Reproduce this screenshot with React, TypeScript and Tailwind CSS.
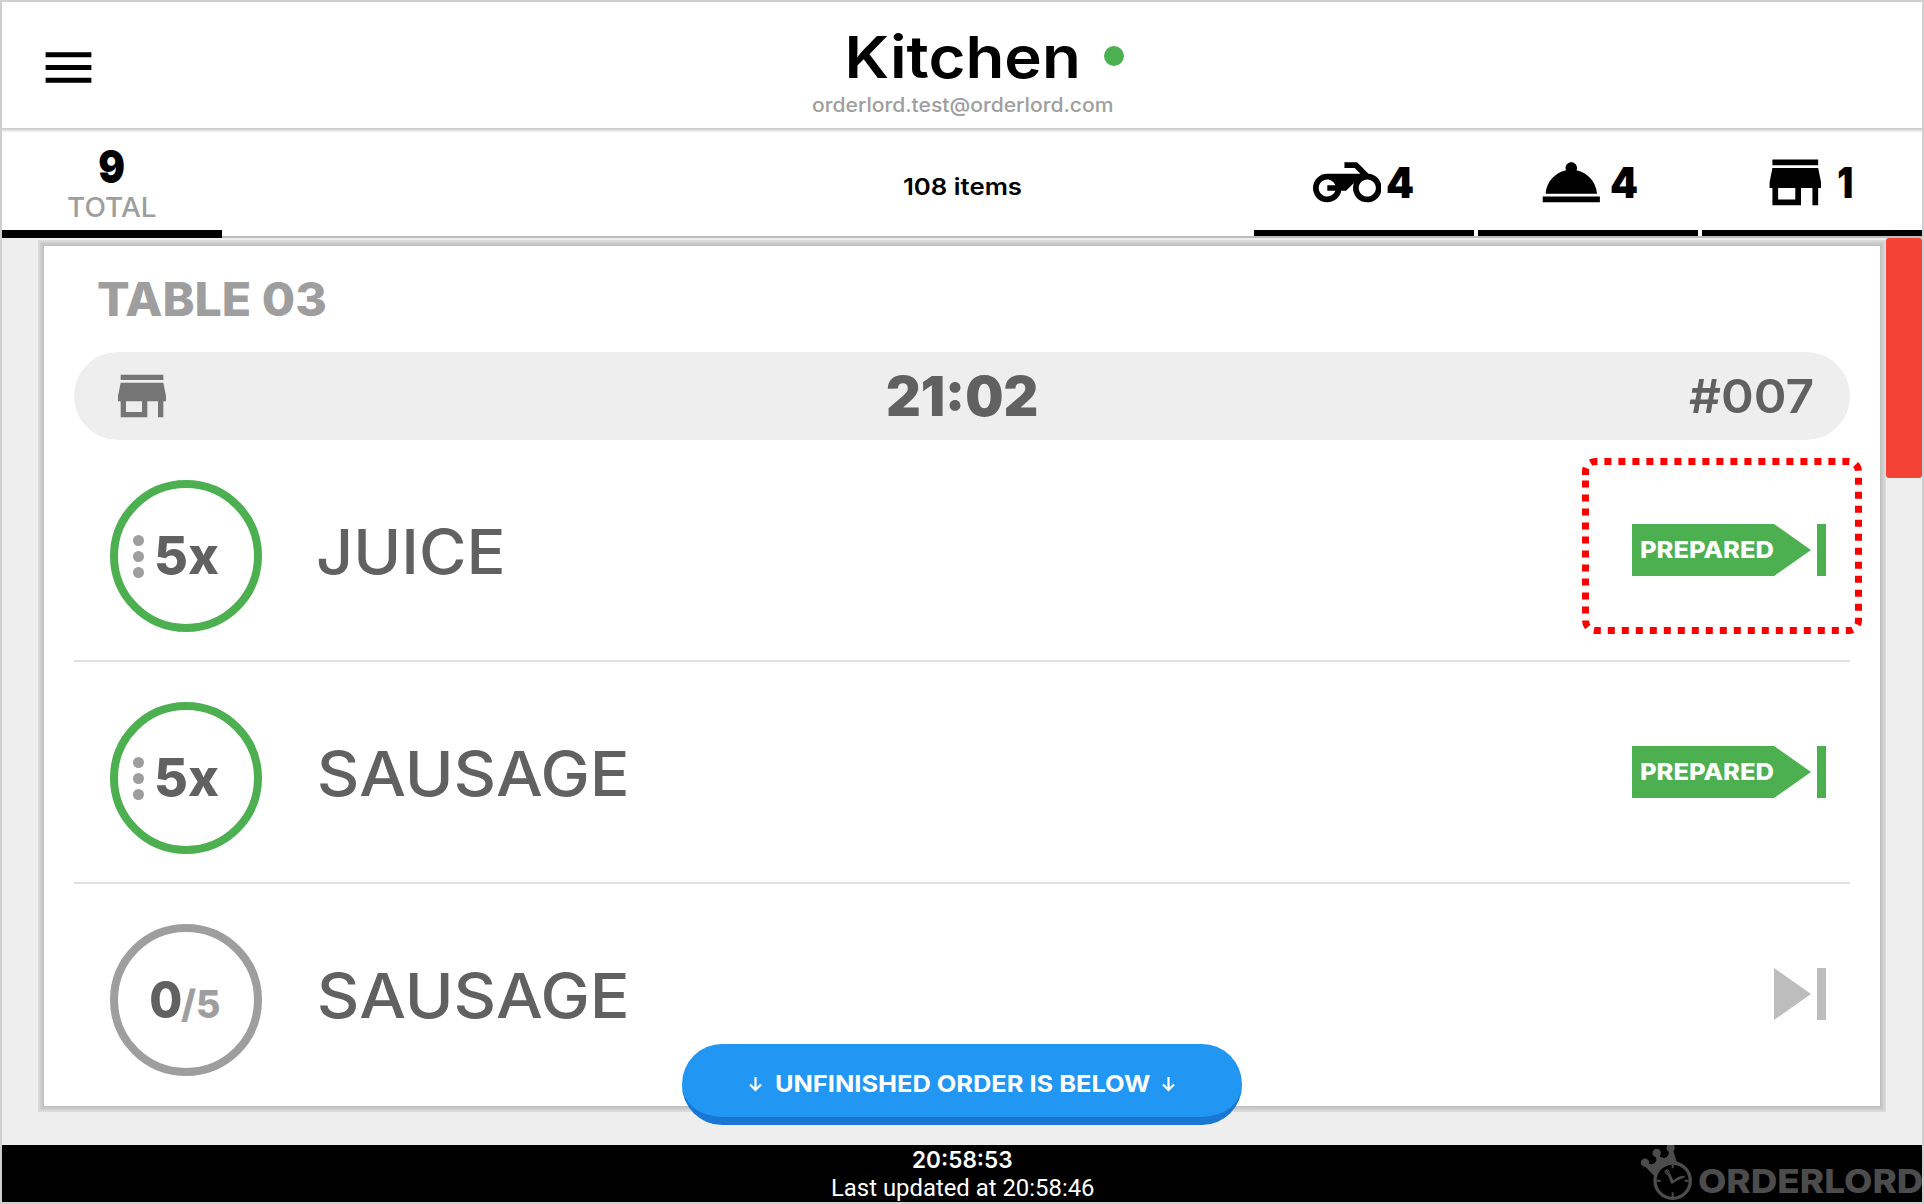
import { useLayoutEffect, useRef, useState } from "react";

type FitProps = { text: string; width: number; className: string };

/* Single line label whose visible glyphs span exactly `width` pixels. */
function Fit({ text, width, className }: FitProps) {
  const ref = useRef<HTMLSpanElement>(null);
  const [transform, setTransform] = useState("none");
  useLayoutEffect(() => {
    const el = ref.current;
    const ctx = document.createElement("canvas").getContext("2d");
    if (!el || !ctx) return;
    const cs = getComputedStyle(el);
    ctx.font = `${cs.fontWeight} ${cs.fontSize} ${cs.fontFamily}`;
    const m = ctx.measureText(text);
    const ink = m.actualBoundingBoxLeft + m.actualBoundingBoxRight;
    const k = width / ink;
    setTransform(`translateX(${m.actualBoundingBoxLeft * k}px) scaleX(${k})`);
  }, [text, width]);
  return (
    <span className={`block shrink-0 whitespace-nowrap text-left leading-none ${className}`} style={{ width }}>
      <span ref={ref} className="inline-block origin-left align-top" style={{ transform }}>
        {text}
      </span>
    </span>
  );
}

const STORE =
  "M20 4H4v2h16V4zm1 10v-2l-1-5H4l-1 5v2h1v6h10v-6h4v6h2v-6h1zm-9 4H6v-4h6v4z";
const MOTO =
  "M19.44 9.03L15.41 5H11v2h3.59l2 2H5c-2.8 0-5 2.2-5 5s2.2 5 5 5c2.46 0 4.45-1.69 4.9-4h1.65l2.77-2.77c-.21.54-.32 1.14-.32 1.77 0 2.8 2.2 5 5 5s5-2.2 5-5c0-2.65-1.97-4.77-4.56-4.97zM7.82 15C7.4 16.15 6.28 17 5 17c-1.63 0-3-1.37-3-3s1.37-3 3-3c1.28 0 2.4.85 2.82 2H5v2h2.82zM19 17c-1.66 0-3-1.34-3-3s1.34-3 3-3 3 1.34 3 3-1.34 3-3 3z";
const DISH =
  "M2 17h20v2H2zm11.84-9.21c.1-.24.16-.51.16-.79 0-1.1-.9-2-2-2s-2 .9-2 2c0 .28.06.55.16.79C6.25 8.6 3.27 11.93 3 16h18c-.27-4.07-3.25-7.4-7.16-8.21z";

function Icon({ d, className }: { d: string; className: string }) {
  return (
    <svg viewBox="0 0 24 24" fill="currentColor" className={`shrink-0 ${className}`}>
      <path d={d} />
    </svg>
  );
}

function Header() {
  return (
    <header className="relative z-10 grid h-[126px] grid-cols-[1fr_auto_1fr] items-start bg-white shadow-[0_1px_0_#cbcbcb,0_2px_0_#d6d6d6,0_3px_0_#e4e4e4,0_4px_0_#f0f0f0,0_5px_0_#fafafa]">
      <Icon d="M3 18h18v-2H3v2zm0-5h18v-2H3v2zm0-7v2h18V6H3z" className="ml-[35.6px] mt-[35px] size-[61px]" />
      <div className="flex flex-col items-center pt-[26px]">
        <div className="relative left-px">
          <Fit text="Kitchen" width={228} className="text-[58px] font-semibold" />
          <span className="absolute left-full top-[18px] ml-[27px] size-5 rounded-full bg-[#4caf50]" />
        </div>
        <Fit text="orderlord.test@orderlord.com" width={300} className="mt-[10px] text-[19.5px] font-medium text-[#9e9e9e]" />
      </div>
    </header>
  );
}

const tabs = [
  { icon: MOTO, n: "4", w: 26, gap: "gap-[6px]" },
  { icon: DISH, n: "4", w: 26, gap: "gap-[6px]" },
  { icon: STORE, n: "1", w: 14, gap: "gap-[9px]" },
];

function Tabs() {
  return (
    <nav className="flex h-[110px] items-start bg-white shadow-[inset_0_-2px_0_#bdbdbd]">
      <div className="flex h-[110px] w-[220px] flex-col items-center border-b-8 border-black pt-[15px]">
        <Fit text="9" width={25} className="mr-px text-[46px] font-black" />
        <Fit text="TOTAL" width={88} className="mt-[4.5px] text-[27.5px] font-medium text-[#9e9e9e]" />
      </div>
      <div className="flex-1 pl-[682px] pt-[47px]">
        <Fit text="108 items" width={117} className="text-[23.5px] font-semibold" />
      </div>
      <div className="flex gap-1">
        {tabs.map((t, i) => (
          <div key={i} className={`flex h-[108px] w-[220px] items-center border-b-6 border-black pl-[58.7px] pt-[6px] ${t.gap}`}>
            <Icon d={t.icon} className="size-[68.6px]" />
            <Fit text={t.n} width={t.w} className="text-[43px] font-black" />
          </div>
        ))}
      </div>
    </nav>
  );
}

function DoneCount() {
  return (
    <div className="ml-9 mt-10 flex size-[152px] items-center rounded-full border-8 border-[#4caf50] pl-[14.5px]">
      <div className="mr-[12px] flex flex-col gap-[5px]">
        <i className="size-[11px] rounded-full bg-[#9e9e9e]" />
        <i className="size-[11px] rounded-full bg-[#9e9e9e]" />
        <i className="size-[11px] rounded-full bg-[#9e9e9e]" />
      </div>
      <Fit text="5x" width={63} className="text-[52px] font-extrabold" />
    </div>
  );
}

function OpenCount() {
  return (
    <div className="ml-9 mt-10 flex size-[152px] items-center rounded-full border-8 border-[#9e9e9e] pb-[2px] pl-[33px]">
      <div className="flex items-baseline">
        <Fit text="0" width={30} className="text-[51px] font-extrabold" />
        <Fit text="/5" width={38.5} className="text-[38.5px] font-extrabold text-[#9e9e9e]" />
      </div>
    </div>
  );
}

function PreparedFlag() {
  return (
    <div className="mr-6 mt-[84px] flex h-[52px] gap-[6px]">
      <div className="flex w-[179px] items-center bg-[#4caf50] pl-[9px] text-white [clip-path:polygon(0_0,142px_0,100%_50%,142px_100%,0_100%)]">
        <Fit text="PREPARED" width={133} className="text-[23.5px] font-extrabold" />
      </div>
      <div className="w-[9px] bg-[#4caf50]" />
    </div>
  );
}

function SkipMark() {
  return (
    <div className="mr-6 mt-[84px] flex h-[52px] gap-[6px]">
      <div className="w-[37px] bg-[#bdbdbd] [clip-path:polygon(0_0,100%_50%,0_100%)]" />
      <div className="w-[9px] bg-[#bdbdbd]" />
    </div>
  );
}

const rows = [
  { name: "JUICE", w: 184, done: true, left: "ml-14" },
  { name: "SAUSAGE", w: 306, done: true, left: "ml-[58px]" },
  { name: "SAUSAGE", w: 306, done: false, left: "ml-[58px]" },
];

function OrderCard() {
  return (
    <article className="mx-[42px] h-[860px] bg-white px-[30px] text-[#616161] shadow-[0_0_0_1px_#bfbfbf,0_0_0_2px_#c5c5c5,0_0_0_3px_#cbcbcb,0_0_0_4px_#d0d0d0,0_0_0_5px_#d6d6d6,0_0_0_6px_#dbdbdb]">
      <div className="flex h-[106px] items-center pb-[2px] pl-6">
        <Fit text="TABLE 03" width={227} className="text-[47px] font-extrabold text-[#9e9e9e]" />
      </div>
      <div className="grid h-[88px] grid-cols-[1fr_auto_1fr] items-center rounded-full bg-[#eeeeee] pl-9 pr-[37px]">
        <Icon d={STORE} className="size-16 text-[#757575]" />
        <Fit text="21:02" width={150} className="text-[54.5px] font-black" />
        <div className="flex justify-end pb-[2px]">
          <Fit text="#007" width={124} className="text-[47px] font-semibold" />
        </div>
      </div>
      {rows.map((r, i) => (
        <div key={i} className="flex h-[222px] items-start border-b-2 border-[#e0e0e0] last:border-0">
          {r.done ? <DoneCount /> : <OpenCount />}
          <Fit text={r.name} width={r.w} className={`mt-[80.5px] text-[62px] font-medium ${r.left}`} />
          <div className="flex flex-1 justify-end">{r.done ? <PreparedFlag /> : <SkipMark />}</div>
        </div>
      ))}
    </article>
  );
}

function DownArrow() {
  return (
    <svg viewBox="0 0 13 15" className="h-[15px] w-[13px] shrink-0" fill="none" stroke="#fff" strokeWidth="2.2">
      <path d="M6.5 0v13M1 7.5l5.5 5.5L12 7.5" />
    </svg>
  );
}

function Logo() {
  return (
    <div className="flex h-[57px] items-start justify-end overflow-hidden text-[#4c4c4c]">
      <svg viewBox="60 15 160 168" className="h-[56px] w-[53.33px] shrink-0" fill="currentColor">
        <circle cx="75" cy="68" r="12.5" />
        <circle cx="110" cy="39" r="12.5" />
        <circle cx="152" cy="24" r="12.5" />
        <path d="M72 76L103 108Q130 72 171 68L159 30L147 30Q148 50 134 54Q122 54 117 46L106 48Q114 62 103 70Q92 76 82 68Z" />
        <circle cx="158" cy="122" r="53" fill="#000" stroke="currentColor" strokeWidth="10" />
        <path d="M155 74h6v11h-6zM155 157h6v14h-6zM110 119h12v6h-12zM194 119h12v6h-12z" />
        <path d="M154 131L160 130Q166 122 197 111Q184 102 160 121L150 101Q150 92 142 86L133 92Q134 102 144 106Z" />
        <path d="M136 91l7 12M141 88l6 12" stroke="#000" strokeWidth="1.5" />
      </svg>
      <Fit text="ORDERLORD" width={223.5} className="ml-[5px] mt-[20px] text-[33px] font-extrabold" />
    </div>
  );
}

export default function App() {
  return (
    <div className="flex h-[1204px] w-[1924px] flex-col overflow-hidden border-2 border-[#cfcfcf] bg-white font-['Inter',sans-serif] text-black">
      <Header />
      <Tabs />
      <main className="relative h-[907px] bg-[#eeeeee] pt-2">
        <OrderCard />
        <div className="absolute right-0 top-0 h-[240px] w-9 rounded-[3px] bg-[#f44336]" />
        <svg className="absolute left-[1578px] top-[218px] h-[182px] w-[286px]" viewBox="1580 456 286 182" fill="none" stroke="#ff0000" strokeWidth="7" strokeDasharray="7 7">
          <path d="M1585.5 475V471.5A10 10 0 0 1 1595.5 461.5H1848.5A10 10 0 0 1 1858.5 471.5V620.5A10 10 0 0 1 1848.5 630.5H1595.5A10 10 0 0 1 1585.5 620.5V475" />
        </svg>
        <button className="absolute left-[680px] top-[806px] flex h-[81px] w-[560px] items-center rounded-[40px] border-b-8 border-[#1976d2] bg-[#2196f3] pl-[67px] pt-[7px] text-white">
          <DownArrow />
          <Fit text="UNFINISHED ORDER IS BELOW" width={374} className="ml-[14px] mr-[12px] text-[23.5px] font-bold" />
          <DownArrow />
        </button>
      </main>
      <footer className="grid h-[57px] grid-cols-[1fr_262px_1fr] items-start bg-black text-white">
        <span />
        <div className="flex flex-col items-center pt-[3.5px]">
          <Fit text="20:58:53" width={99} className="text-[23px] font-semibold" />
          <Fit text="Last updated at 20:58:46" width={262} className="relative left-px mt-[4px] font-['Roboto',sans-serif] text-[24px]" />
        </div>
        <Logo />
      </footer>
    </div>
  );
}
